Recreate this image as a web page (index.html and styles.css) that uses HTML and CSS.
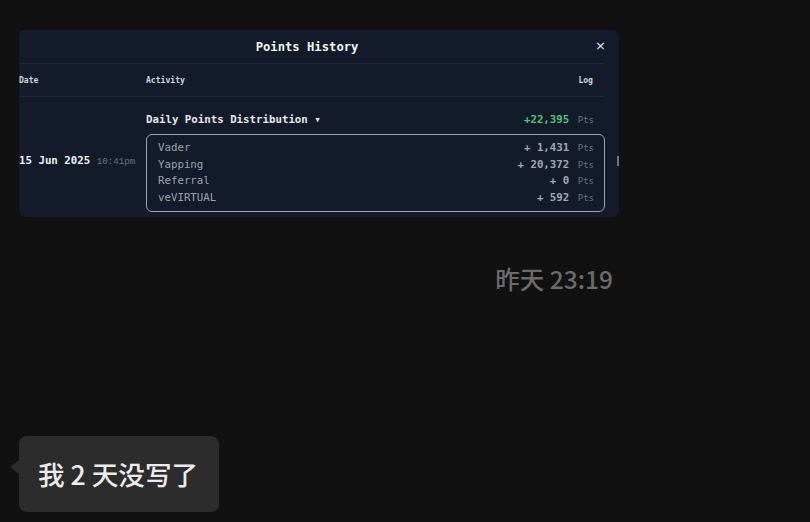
FILE: index.html
```html
<!DOCTYPE html>
<html lang="zh-CN">
<head>
  <meta charset="UTF-8" />
  <meta name="viewport" content="width=device-width, initial-scale=1.0" />
  <title>聊天</title>
  <link rel="stylesheet" href="styles.css">
</head>
<body>

  <main class="chat">

    <!-- Screenshot message -->
    <div class="shot">
      <div class="modal">
        <div class="modal-head">
          <h2>Points History</h2>
          <span class="close">&times;</span>
        </div>

        <div class="row head-row">
          <span class="col-date">Date</span>
          <span class="col-activity">Activity</span>
          <span class="col-log">Log</span>
        </div>

        <div class="row entry">
          <div class="col-date">
            <b>15 Jun 2025</b> <span class="time">10:41pm</span>
          </div>
          <div class="col-main">
            <div class="summary">
              <span>Daily Points Distribution <span class="caret">&#9662;</span></span>
              <span class="total">+22,395 <em>Pts</em></span>
            </div>
            <div class="breakdown">
              <div class="line"><span>Vader</span><span>+ 1,431 <em>Pts</em></span></div>
              <div class="line"><span>Yapping</span><span>+ 20,372 <em>Pts</em></span></div>
              <div class="line"><span>Referral</span><span>+ 0 <em>Pts</em></span></div>
              <div class="line"><span>veVIRTUAL</span><span>+ 592 <em>Pts</em></span></div>
            </div>
          </div>
        </div>
      </div>
      <span class="scroll-thumb"></span>
    </div>

    <div class="stamp">昨天 23:19</div>

    <div class="bubble">我 2 天没写了</div>

  </main>

</body>
</html>
```

FILE: styles.css
```css
body {
  background: #111111;
  margin: 0;
  font-family: "Noto Sans CJK SC", "Noto Sans", sans-serif;
}

.chat {
  padding: 30px 0 0 19px;
  width: 600px;
}

/* Screenshot of the points modal */
.shot {
  position: relative;
  width: 600px;
  height: 187px;
  overflow: hidden;
  border-radius: 6px;
  background: #131a29;
  font-family: "DejaVu Sans Mono", "Liberation Mono", monospace;
}

.modal {
  padding-right: 14px;
}

.modal-head {
  display: flex;
  align-items: center;
  height: 33px;
  border-bottom: 1px solid #1f2638;
}

.modal-head h2 {
  flex: 1;
  margin: 0;
  text-align: center;
  font-size: 12.2px;
  color: #f3f4f6;
}

.close {
  color: #e5e7eb;
  font-family: "DejaVu Sans", sans-serif;
  font-size: 13px;
  line-height: 1;
  padding-bottom: 2px;
  margin-right: -1px;
}

.row {
  display: flex;
  align-items: center;
}

.head-row {
  height: 32px;
  border-bottom: 1px solid #1f2638;
  font-size: 8.1px;
  font-weight: bold;
  color: #d1d5db;
}

.col-date {
  width: 127px;
  flex-shrink: 0;
}

.col-activity {
  flex: 1;
}

.col-log {
  padding-right: 12px;
}

.entry {
  padding-top: 14px;
}

.entry .col-date {
  font-size: 10.75px;
  line-height: 17px;
}

.entry .col-date b {
  color: #eef0f3;
}

.time {
  font-family: "Liberation Mono", monospace;
  font-size: 9.2px;
  color: #6b7280;
}

.col-main {
  flex: 1;
}

.summary {
  display: flex;
  justify-content: space-between;
  padding-right: 11px;
  font-size: 10.75px;
  font-weight: bold;
  color: #e5e7eb;
  height: 17px;
  line-height: 17px;
}

.caret {
  font-size: 11px;
}

.total {
  color: #5bbf78;
}

em {
  font-style: normal;
  font-weight: normal;
  font-size: 9px;
  color: #6b7280;
  margin-left: 2px;
}

.breakdown {
  margin-top: 6px;
  border: 1px solid #9ca3af;
  border-radius: 6px;
  padding: 5px 10px 4px 11px;
  font-size: 10.75px;
  color: #9ca3af;
}

.line {
  display: flex;
  justify-content: space-between;
  height: 16.7px;
  line-height: 16.7px;
}

.line span:last-child {
  font-weight: bold;
  color: #a1a7b3;
}

.scroll-thumb {
  position: absolute;
  right: 0;
  top: 126px;
  width: 2px;
  height: 10px;
  background: #6b7280;
}

/* Time divider */
.stamp {
  margin-top: 46px;
  padding-right: 6px;
  text-align: right;
  font-size: 24.5px;
  font-weight: 500;
  color: #6b6b6b;
  line-height: 32px;
}

/* Incoming text bubble */
.bubble {
  position: relative;
  display: inline-block;
  margin-top: 141px;
  padding: 19px 21px 19px 19px;
  background: #2c2c2c;
  border-radius: 8px;
  color: #ececec;
  font-size: 26.6px;
  font-weight: 500;
  line-height: 38px;
}

.bubble::before {
  content: "";
  position: absolute;
  left: -9px;
  top: 24px;
  border-top: 7px solid transparent;
  border-bottom: 7px solid transparent;
  border-right: 9px solid #2c2c2c;
}
```
